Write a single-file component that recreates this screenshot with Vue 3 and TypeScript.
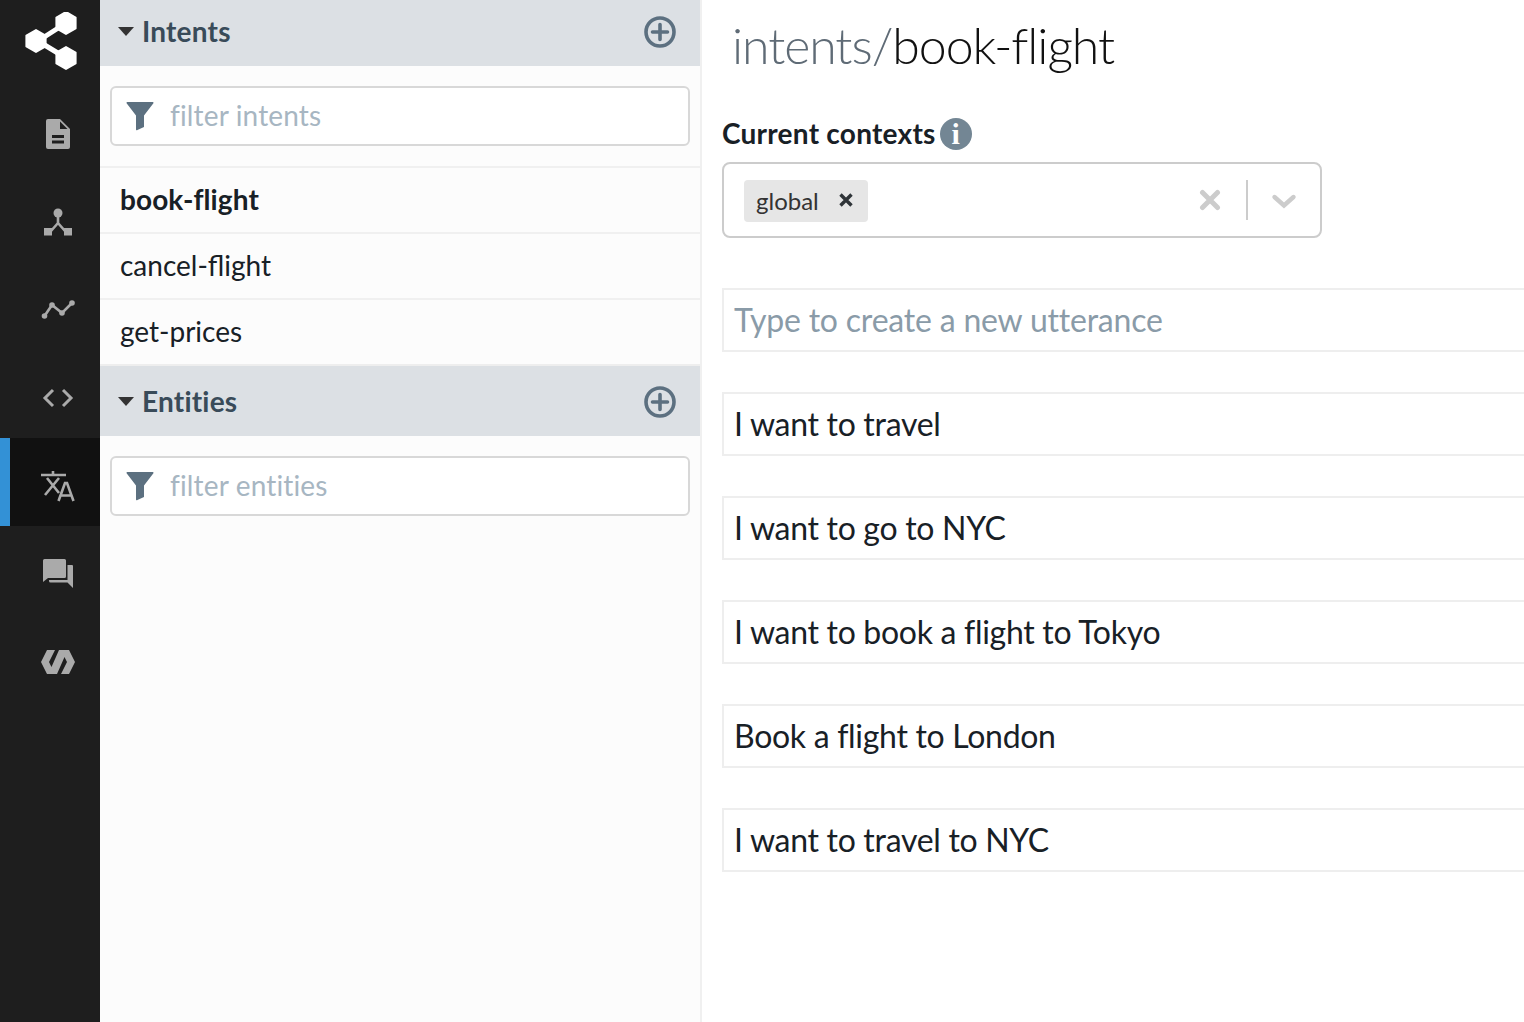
<template>
  <div class="app">
    <nav class="nav">
      <div class="logo">
        <svg width="54" height="60" viewBox="0 0 54 60">
          <path d="M14 29L42 11M14 29L42 46" stroke="#fff" stroke-width="5" fill="none"/>
          <path v-for="c in logoHex" :key="c[1]" :d="hexPath(c[0], c[1])" fill="#fff" stroke="#fff" stroke-width="2" stroke-linejoin="round"/>
        </svg>
      </div>
      <div v-for="item in navItems" :key="item.name" class="nav-item" :class="{ active: item.name === 'nlu' }">
        <svg width="36" height="36" viewBox="0 0 36 36" v-html="item.svg"></svg>
      </div>
    </nav>

    <aside class="side">
      <div class="side-head">
        <span class="caret"></span>
        <span class="side-title">Intents</span>
        <svg class="plus" width="34" height="34" viewBox="0 0 34 34"><circle cx="17" cy="17" r="14" fill="none" stroke="#5c7080" stroke-width="3.6"/><path d="M17 9.5v15M9.5 17h15" stroke="#5c7080" stroke-width="3.6" stroke-linecap="round"/></svg>
      </div>
      <div class="filter-wrap">
        <div class="filter">
          <svg width="30" height="30" viewBox="0 0 30 30"><path d="M1.2 1h25.600a.8.8 0 0 1 .6 1.300L18 14.500v11.500L11.400 29a.8.8 0 0 1-1.400-.7V14.500L.6 2.300A.8.8 0 0 1 1.200 1z" fill="#5c7080"/></svg>
          <span class="filter-text">filter intents</span>
        </div>
      </div>
      <div v-for="(intent, i) in intents" :key="intent" class="row" :class="{ selected: i === 0 }">{{ intent }}</div>
      <div class="side-head entities">
        <span class="caret"></span>
        <span class="side-title">Entities</span>
        <svg class="plus" width="34" height="34" viewBox="0 0 34 34"><circle cx="17" cy="17" r="14" fill="none" stroke="#5c7080" stroke-width="3.6"/><path d="M17 9.5v15M9.5 17h15" stroke="#5c7080" stroke-width="3.6" stroke-linecap="round"/></svg>
      </div>
      <div class="filter-wrap">
        <div class="filter">
          <svg width="30" height="30" viewBox="0 0 30 30"><path d="M1.2 1h25.600a.8.8 0 0 1 .6 1.300L18 14.500v11.500L11.400 29a.8.8 0 0 1-1.400-.7V14.500L.6 2.300A.8.8 0 0 1 1.200 1z" fill="#5c7080"/></svg>
          <span class="filter-text">filter entities</span>
        </div>
      </div>
    </aside>

    <main class="main">
      <h1 class="title"><span class="title-dim">intents/</span>book-flight</h1>
      <div class="ctx-label">
        <span class="ctx-text">Current contexts</span>
        <span class="info">i</span>
      </div>
      <div class="select">
        <div class="tag">
          <span>global</span>
          <svg width="14" height="14" viewBox="0 0 14 14"><path d="M1.500 1.500l11 11M12.500 1.500l-11 11" stroke="#2f3438" stroke-width="3.400"/></svg>
        </div>
        <div class="select-actions">
          <svg width="22" height="22" viewBox="0 0 22 22"><path d="M3.500 3.500l15 15M18.500 3.500l-15 15" stroke="#ccc" stroke-width="5" stroke-linecap="round"/></svg>
          <span class="sep"></span>
          <svg class="chevron" width="26" height="18" viewBox="0 0 26 18"><path d="M3.500 5l9.500 8.500L22.500 5" fill="none" stroke="#ccc" stroke-width="4.400" stroke-linecap="round"/></svg>
        </div>
      </div>
      <div class="utter placeholder">Type to create a new utterance</div>
      <div v-for="u in utterances" :key="u" class="utter">{{ u }}</div>
    </main>
  </div>
</template>

<script setup lang="ts">
const intents = ['book-flight', 'cancel-flight', 'get-prices']
const utterances = [
  'I want to travel',
  'I want to go to NYC',
  'I want to book a flight to Tokyo',
  'Book a flight to London',
  'I want to travel to NYC'
]

const logoHex = [
  [12, 29],
  [42, 11],
  [42, 46]
]

// hexagon, pointy on top
const hexPath = (cx: number, cy: number) => {
  const r = 11
  const w = 9.6
  return `M${cx} ${cy - r}L${cx + w} ${cy - r / 2}V${cy + r / 2}L${cx} ${cy + r}L${cx - w} ${cy + r / 2}V${cy - r / 2}Z`
}

const g = '#aaaaaa'
const navItems = [
  {
    name: 'content',
    svg: `<path d="M6 5a2 2 0 0 1 2-2h12l10 10v18a2 2 0 0 1-2 2H8a2 2 0 0 1-2-2z" fill="${g}"/><path d="M20 5.500v7.500h7.500z" fill="#1e1e1e"/><path d="M12 19h12v3H12zM12 24.500h12v3H12z" fill="#1e1e1e"/>`
  },
  {
    name: 'flows',
    svg: `<circle cx="18" cy="9" r="4.500" fill="${g}"/><path d="M18 12v8M18 19l-7 8M18 19l7 8" stroke="${g}" stroke-width="2.600" fill="none"/><rect x="4" y="24" width="8" height="7.500" fill="${g}"/><rect x="24" y="24" width="8" height="7.500" fill="${g}"/>`
  },
  {
    name: 'analytics',
    svg: `<path d="M4.500 24L12 13l10 8 10-10" fill="none" stroke="${g}" stroke-width="2.600"/><circle cx="4.500" cy="24" r="2.800" fill="${g}"/><circle cx="12" cy="13" r="2.800" fill="${g}"/><circle cx="22" cy="21" r="2.800" fill="${g}"/><circle cx="32" cy="11" r="2.800" fill="${g}"/>`
  },
  {
    name: 'code',
    svg: `<path d="M13 10l-8 8 8 8M23 10l8 8-8 8" fill="none" stroke="${g}" stroke-width="3"/>`
  },
  {
    name: 'nlu',
    svg: `<path d="M1 7h25M13 3v4M5 27L19 10M7 10l12 15" fill="none" stroke="${g}" stroke-width="2.600"/><path d="M18.500 33L25 15h2l6.500 18M21 27.500h10" fill="none" stroke="${g}" stroke-width="2.600"/>`
  },
  {
    name: 'qna',
    svg: `<path d="M3 4.500A1.500 1.500 0 0 1 4.500 3h20A1.500 1.500 0 0 1 26 4.500v16a1.500 1.500 0 0 1-1.500 1.500H8l-5 4z" fill="${g}"/><path d="M27.500 9H32a1 1 0 0 1 1 1v22l-5.500-5.500H10.500A1.500 1.500 0 0 1 9 25v-1h18.500z" fill="${g}"/>`
  },
  {
    name: 'sdk',
    svg: `<path d="M1 18L7 6h8L9 18l2.500 5L19 6h10l6 12-6 12h-8l6-12-2.500-5L17 30H7z" fill="${g}"/>`
  }
]
</script>

<style scoped>
.app {
  display: flex;
  height: 1022px;
  overflow: hidden;
  font-family: Lato, sans-serif;
  background: #fff;
}

.nav {
  width: 100px;
  flex-shrink: 0;
  background: #1e1e1e;
}

.logo {
  height: 86px;
  padding: 12px 0 0 24px;
  box-sizing: border-box;
}

.nav-item {
  height: 88px;
  padding-top: 8px;
  box-sizing: border-box;
  display: flex;
  align-items: center;
  justify-content: center;
  padding-left: 16px;
}

.nav-item.active {
  background: #111;
  border-left: 10px solid #3391d6;
  padding-left: 6px;
}

.side {
  width: 602px;
  flex-shrink: 0;
  box-sizing: border-box;
  background: #fcfcfc;
  border-right: 2px solid #f0f0f0;
}

.side-head {
  height: 66px;
  box-sizing: border-box;
  background: #dce0e4;
  display: flex;
  align-items: center;
  padding: 0 23px 3px 18px;
}

.side-head.entities {
  height: 72px;
  padding-bottom: 0;
  border-top: 2px solid #eee;
}

.side-head.entities .plus {
  margin-top: 2px;
}

.side-head.entities .side-title {
  margin-bottom: 0;
}

.caret {
  width: 0;
  height: 0;
  border-left: 8px solid transparent;
  border-right: 8px solid transparent;
  border-top: 9px solid #333;
  margin-right: 8px;
}

.side-title {
  flex: 1;
  font-size: 28px;
  font-weight: 700;
  letter-spacing: 0.2px;
  color: #394b59;
  margin-bottom: 2px;
}

.filter-wrap {
  padding: 20px 10px;
}

.filter {
  height: 60px;
  box-sizing: border-box;
  background: #fff;
  border: 2px solid #d8d8d8;
  border-radius: 6px;
  display: flex;
  align-items: center;
  padding-left: 14px;
  gap: 14px;
}

.filter-text {
  font-size: 28px;
  letter-spacing: 0.15px;
  margin-top: -2px;
  color: #a7b6c2;
}

.row {
  height: 66px;
  box-sizing: border-box;
  border-top: 2px solid #f0f0f0;
  display: flex;
  align-items: center;
  padding: 0 0 2px 20px;
  font-size: 28px;
  color: #182026;
}

.row.selected {
  font-weight: 700;
  letter-spacing: 0.1px;
}

.main {
  flex: 1;
  min-width: 0;
  padding-left: 20px;
  background: #fff;
}

.title {
  margin: 0 0 0 10px;
  height: 94px;
  line-height: 90px;
  font-size: 50px;
  font-weight: 300;
  letter-spacing: -1.05px;
  color: #111;
}

.title-dim {
  color: #5f6b76;
}

.ctx-label {
  height: 68px;
  display: flex;
  align-items: center;
  gap: 4px;
  font-size: 28px;
  font-weight: 700;
  letter-spacing: 0.25px;
  color: #182026;
  margin-top: 6px;
}

.ctx-text {
  margin-bottom: 2px;
}

.info {
  width: 32px;
  height: 32px;
  border-radius: 50%;
  background: #738694;
  color: #fff;
  font-family: "Liberation Serif", serif;
  font-size: 30px;
  letter-spacing: 0;
  display: flex;
  align-items: center;
  justify-content: center;
}

.select {
  width: 600px;
  height: 76px;
  box-sizing: border-box;
  border: 2px solid #ccc;
  border-radius: 8px;
  display: flex;
  align-items: center;
  justify-content: space-between;
  padding-left: 20px;
  margin-bottom: 50px;
  margin-top: -6px;
}

.tag {
  height: 42px;
  width: 124px;
  box-sizing: border-box;
  background: #e6e6e6;
  border-radius: 4px;
  display: flex;
  align-items: center;
  justify-content: space-between;
  margin-top: 2px;
  padding: 0 15px 2px 12px;
  font-size: 24px;
  color: #333;
}

.select-actions {
  display: flex;
  align-items: center;
  gap: 25px;
  padding-right: 23px;
}

.chevron {
  margin-left: -2px;
  margin-top: 2px;
}

.sep {
  width: 2px;
  height: 40px;
  background: #ccc;
}

.utter {
  height: 64px;
  box-sizing: border-box;
  border: 2px solid #eee;
  border-right: 0;
  display: flex;
  align-items: center;
  padding: 0 0 2px 10px;
  font-size: 32px;
  letter-spacing: -0.3px;
  color: #182026;
  margin-bottom: 40px;
}

.utter.placeholder {
  letter-spacing: -0.2px;
  color: #8a9ba8;
}
</style>
